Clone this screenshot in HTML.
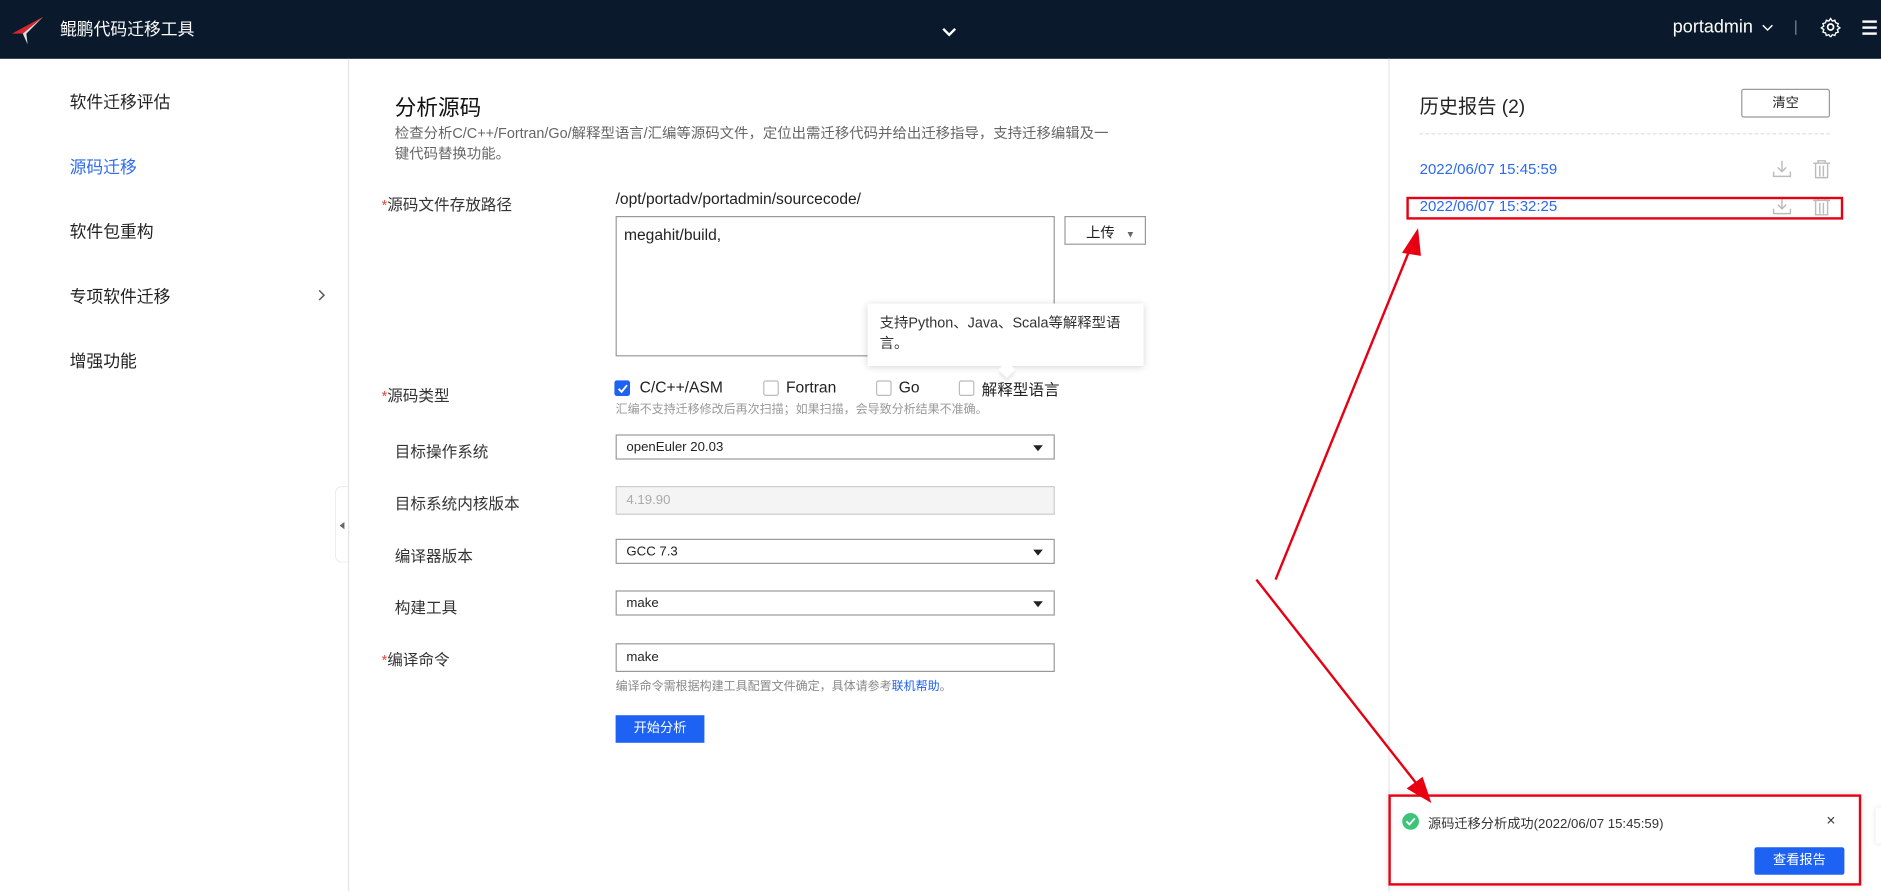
<!DOCTYPE html>
<html><head><meta charset="utf-8">
<style>
*{box-sizing:border-box;margin:0;padding:0}
html,body{width:1881px;height:891px;overflow:hidden;background:#fff}
#w{position:absolute;left:0;top:0;width:1568px;height:743px;transform:scale(1.2);transform-origin:0 0;font-family:"Liberation Sans","Noto Sans CJK SC",sans-serif;color:#222}
.a{position:absolute;white-space:nowrap}
.lbl{font-size:13px;color:#333}
.star{color:#e43;font-size:12px}
.sel{position:absolute;left:513px;width:366px;border:1px solid #9a9a9a;font-size:11px;padding-left:8px;display:flex;align-items:center;color:#222}
.sel:after{content:"";position:absolute;right:9px;top:50%;margin-top:-2px;border:4px solid transparent;border-top:5px solid #222;border-bottom:0}
.cb{position:absolute;width:13px;height:13px;border:1px solid #bbb;border-radius:2px;background:#fff}
</style></head><body><div id="w">
<div class="a" style="left:0;top:0;width:1568px;height:49px;background:#0a192b"></div>
<svg class="a" style="left:9px;top:13px" width="28" height="26" viewBox="0 0 28 26"><path d="M27 1 L1 15 L10 15 Z" fill="#d9262c"/><path d="M27 1 L10 15 L14 24 L13 15 Z" fill="#ddd"/></svg>
<div class="a" style="left:50px;top:14px;font-size:14px;color:#fff">鲲鹏代码迁移工具</div>
<svg class="a" style="left:784px;top:22px" width="14" height="10"><path d="M2 2 L7 7 L12 2" stroke="#fff" stroke-width="2" fill="none"/></svg>
<div class="a" style="left:1394px;top:14px;font-size:15px;color:#fff">portadmin</div>
<svg class="a" style="left:1467px;top:19px" width="12" height="8"><path d="M2 2 L6 6 L10 2" stroke="#fff" stroke-width="1.2" fill="none"/></svg>
<div class="a" style="left:1496px;top:17px;width:1px;height:12px;background:#888"></div>
<svg class="a" style="left:1517px;top:14px" width="17" height="17" viewBox="0 0 24 24"><circle cx="12" cy="12" r="3.5" stroke="#fff" stroke-width="2" fill="none"/><path d="M12 2l2 3 3-1 1 3 3 1-1 3 3 2-3 2 1 3-3 1-1 3-3-1-2 3-2-3-3 1-1-3-3-1 1-3-3-2 3-2-1-3 3-1 1-3 3 1z" stroke="#fff" stroke-width="1.6" fill="none"/></svg>
<div class="a" style="left:1552px;top:17px;width:12px;height:1.5px;background:#fff;box-shadow:0 5px 0 #fff,0 10px 0 #fff"></div>

<div class="a" style="left:290px;top:49px;width:1px;height:694px;background:#e3e5e8"></div>
<div class="a" style="left:1157px;top:49px;width:1px;height:694px;background:#e3e5e8"></div>
<div class="a" style="left:58px;top:75px;font-size:14px">软件迁移评估</div>
<div class="a" style="left:58px;top:129px;font-size:14px;color:#2d6af0">源码迁移</div>
<div class="a" style="left:58px;top:183px;font-size:14px">软件包重构</div>
<div class="a" style="left:58px;top:237px;font-size:14px">专项软件迁移</div>
<svg class="a" style="left:264px;top:240px" width="8" height="12"><path d="M2 2 L6 6 L2 10" stroke="#555" stroke-width="1.2" fill="none"/></svg>
<div class="a" style="left:58px;top:291px;font-size:14px">增强功能</div>
<div class="a" style="left:279px;top:405px;width:11px;height:64px;background:#fff;border:1px solid #eee;border-right:0;border-radius:6px 0 0 6px"></div>
<div class="a" style="left:283px;top:435px;border:3px solid transparent;border-right:4px solid #666;border-left:0"></div>

<div class="a" style="left:329px;top:76px;font-size:18px;color:#111">分析源码</div>
<div class="a" style="left:329px;top:103px;font-size:12px;color:#666;line-height:17px;white-space:normal;width:600px">检查分析C/C++/Fortran/Go/解释型语言/汇编等源码文件，定位出需迁移代码并给出迁移指导，支持迁移编辑及一键代码替换功能。</div>

<div class="a lbl" style="left:318px;top:160px"><span class="star">*</span>源码文件存放路径</div>
<div class="a" style="left:513px;top:158px;font-size:13px;color:#222">/opt/portadv/portadmin/sourcecode/</div>
<div class="a" style="left:513px;top:180px;width:366px;height:117px;border:1px solid #999;font-size:13px;padding:7px 6px">megahit/build,</div>
<div class="a" style="left:887px;top:180px;width:68px;height:24px;border:1px solid #999;font-size:12px;padding:4px 0 0 17px">上传<span style="font-size:8px;color:#666;margin-left:9px">▼</span></div>
<div class="a" style="left:723px;top:253px;width:230px;height:52px;background:#fff;box-shadow:0 1px 6px rgba(0,0,0,.18);font-size:12px;color:#333;padding:8px 10px;line-height:17px;white-space:normal">支持Python、Java、Scala等解释型语言。</div>
<div class="a" style="left:834px;top:303px;width:10px;height:10px;background:#fff;transform:rotate(45deg);box-shadow:2px 2px 3px rgba(0,0,0,.1)"></div>

<div class="a lbl" style="left:318px;top:319px"><span class="star">*</span>源码类型</div>
<div class="cb" style="left:512px;top:317px;background:#1e62f4;border-color:#1e62f4"></div>
<svg class="a" style="left:513px;top:318px" width="12" height="12"><path d="M2.5 6 L5 8.5 L9.5 3" stroke="#fff" stroke-width="1.6" fill="none"/></svg>
<div class="a" style="left:533px;top:315px;font-size:13px">C/C++/ASM</div>
<div class="cb" style="left:636px;top:317px"></div><div class="a" style="left:655px;top:315px;font-size:13px">Fortran</div>
<div class="cb" style="left:730px;top:317px"></div><div class="a" style="left:749px;top:315px;font-size:13px">Go</div>
<div class="cb" style="left:799px;top:317px"></div><div class="a" style="left:818px;top:314px;font-size:13px">解释型语言</div>
<div class="a" style="left:513px;top:332px;font-size:10px;color:#999">汇编不支持迁移修改后再次扫描；如果扫描，会导致分析结果不准确。</div>

<div class="a lbl" style="left:329px;top:366px">目标操作系统</div>
<div class="sel" style="top:362px;height:21px">openEuler 20.03</div>
<div class="a lbl" style="left:329px;top:409px">目标系统内核版本</div>
<div class="a" style="left:513px;top:405px;width:366px;height:24px;border:1px solid #ccc;background:#f4f4f4;font-size:11px;color:#aaa;padding:5px 8px">4.19.90</div>
<div class="a lbl" style="left:329px;top:453px">编译器版本</div>
<div class="sel" style="top:449px;height:21px">GCC 7.3</div>
<div class="a lbl" style="left:329px;top:496px">构建工具</div>
<div class="sel" style="top:492px;height:21px">make</div>
<div class="a lbl" style="left:318px;top:539px"><span class="star">*</span>编译命令</div>
<div class="a" style="left:513px;top:536px;width:366px;height:24px;border:1px solid #999;font-size:11px;padding:5px 8px">make</div>
<div class="a" style="left:513px;top:563px;font-size:10px;color:#888">编译命令需根据构建工具配置文件确定，具体请参考<span style="color:#1e62f4">联机帮助</span>。</div>
<div class="a" style="left:513px;top:596px;width:74px;height:23px;background:#1e62f4;color:#fff;font-size:11px;text-align:center;line-height:23px">开始分析</div>

<div class="a" style="left:1183px;top:75px;font-size:16px;color:#222">历史报告 (2)</div>
<div class="a" style="left:1451px;top:74px;width:74px;height:24px;border:1px solid #999;border-radius:2px;font-size:11px;text-align:center;line-height:22px">清空</div>
<div class="a" style="left:1183px;top:111px;width:342px;border-top:1px dashed #ddd"></div>
<div class="a" style="left:1183px;top:134px;font-size:12.5px;color:#2d6af0">2022/06/07 15:45:59</div>
<div class="a" style="left:1183px;top:165px;font-size:12.5px;color:#2d6af0">2022/06/07 15:32:25</div>
<svg class="a" style="left:1477px;top:133px" width="16" height="16"><path d="M8 1v9M4.5 6.5L8 10l3.5-3.5M1 10v4h14v-4" stroke="#bbb" stroke-width="1.2" fill="none"/></svg>
<svg class="a" style="left:1510px;top:133px" width="16" height="16"><path d="M1 3h14M5 3V1h6v2M3 3v12h10V3M6.5 5v9M9.5 5v9" stroke="#bbb" stroke-width="1.2" fill="none"/></svg>
<svg class="a" style="left:1477px;top:164px" width="16" height="16"><path d="M8 1v9M4.5 6.5L8 10l3.5-3.5M1 10v4h14v-4" stroke="#bbb" stroke-width="1.2" fill="none"/></svg>
<svg class="a" style="left:1510px;top:164px" width="16" height="16"><path d="M1 3h14M5 3V1h6v2M3 3v12h10V3M6.5 5v9M9.5 5v9" stroke="#bbb" stroke-width="1.2" fill="none"/></svg>
<div class="a" style="left:1172px;top:164px;width:364px;height:19px;border:2px solid #e60012"></div>

<div class="a" style="left:1563px;top:673px;width:10px;height:30px;background:#fff;box-shadow:0 0 4px rgba(0,0,0,.12)"></div>
<div class="a" style="left:1157px;top:662px;width:394px;height:76px;background:#fff;box-shadow:0 0 6px rgba(0,0,0,.12);border:2px solid #e60012"></div>
<svg class="a" style="left:1168px;top:677px" width="15" height="15"><circle cx="7.5" cy="7.5" r="7" fill="#3ec47a"/><path d="M4 7.5 L6.5 10 L11 5" stroke="#fff" stroke-width="1.5" fill="none"/></svg>
<div class="a" style="left:1190px;top:678px;font-size:11px;color:#333">源码迁移分析成功(2022/06/07 15:45:59)</div>
<div class="a" style="left:1522px;top:676px;font-size:13px;color:#333">×</div>
<div class="a" style="left:1462px;top:706px;width:75px;height:23px;background:#1e62f4;color:#fff;font-size:11px;text-align:center;line-height:23px;border-radius:2px">查看报告</div>

<svg class="a" style="left:0;top:0" width="1568" height="743"><g stroke="#e60012" stroke-width="2" fill="#e60012"><line x1="1063" y1="483" x2="1176" y2="205"/><path d="M1181 193 L1170 210 L1183 212 Z"/><line x1="1047" y1="483" x2="1182" y2="655"/><path d="M1191 667 L1174 657 L1185 649 Z"/></g></svg>
</div></body></html>
